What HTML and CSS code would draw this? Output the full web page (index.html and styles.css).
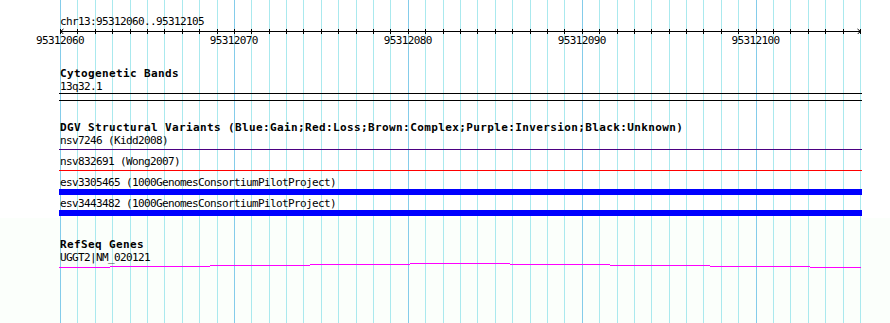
FILE: index.html
```html
<!DOCTYPE html>
<html lang="en">
<head>
  <meta charset="UTF-8" />
  <title>chr13:95312060..95312105</title>
  <link rel="stylesheet" href="styles.css">
</head>
<body>

  <div class="browser">

    <!-- grid, one line per base -->
    <svg class="grid" width="890" height="323" viewBox="0 0 890 323">
      <path class="grid-minor" d="M77.5 0V323M95.5 0V323M112.5 0V323M130.5 0V323M147.5 0V323M164.5 0V323M182.5 0V323M199.5 0V323M217.5 0V323M251.5 0V323M269.5 0V323M286.5 0V323M303.5 0V323M321.5 0V323M338.5 0V323M356.5 0V323M373.5 0V323M390.5 0V323M425.5 0V323M443.5 0V323M460.5 0V323M477.5 0V323M495.5 0V323M512.5 0V323M530.5 0V323M547.5 0V323M564.5 0V323M599.5 0V323M617.5 0V323M634.5 0V323M651.5 0V323M669.5 0V323M686.5 0V323M703.5 0V323M721.5 0V323M738.5 0V323M773.5 0V323M790.5 0V323M808.5 0V323M825.5 0V323M843.5 0V323M860.5 0V323"/>
      <path class="grid-major" d="M60.5 0V323M234.5 0V323M408.5 0V323M582.5 0V323M756.5 0V323"/>
    </svg>

    <!-- Ruler -->
    <div class="ruler">
      <div class="ruler-pos">chr13:95312060..95312105</div>
      <svg class="ruler-axis" width="890" height="6" viewBox="0 0 890 6">
        <path class="axis" d="M60 3.5H861M60.5 3.5L63.5 1M60.5 3.5L63.5 6M860.5 3.5L857.5 1M860.5 3.5L857.5 6"/>
        <path class="axis" d="M60.5 1V6M77.5 1V6M95.5 1V6M112.5 1V6M130.5 1V6M147.5 1V6M164.5 1V6M182.5 1V6M199.5 1V6M217.5 1V6M234.5 1V6M251.5 1V6M269.5 1V6M286.5 1V6M303.5 1V6M321.5 1V6M338.5 1V6M356.5 1V6M373.5 1V6M390.5 1V6M408.5 1V6M425.5 1V6M443.5 1V6M460.5 1V6M477.5 1V6M495.5 1V6M512.5 1V6M530.5 1V6M547.5 1V6M564.5 1V6M582.5 1V6M599.5 1V6M617.5 1V6M634.5 1V6M651.5 1V6M669.5 1V6M686.5 1V6M703.5 1V6M721.5 1V6M738.5 1V6M756.5 1V6M773.5 1V6M790.5 1V6M808.5 1V6M825.5 1V6M843.5 1V6M860.5 1V6"/>
      </svg>
      <div class="ruler-labels">
        <span>95312060</span>
        <span>95312070</span>
        <span>95312080</span>
        <span>95312090</span>
        <span>95312100</span>
      </div>
    </div>

    <!-- Cytogenetic Bands -->
    <div class="track">
      <div class="track-title">Cytogenetic Bands</div>
      <div class="feature-label">13q32.1</div>
      <div class="band"></div>
    </div>

    <!-- DGV -->
    <div class="track">
      <div class="track-title">DGV Structural Variants (Blue:Gain;Red:Loss;Brown:Complex;Purple:Inversion;Black:Unknown)</div>
      <div class="feature-label">nsv7246 (Kidd2008)</div>
      <div class="feature"><div class="sv-line inversion"></div></div>
      <div class="feature-label">nsv832691 (Wong2007)</div>
      <div class="feature"><div class="sv-line loss"></div></div>
      <div class="feature-label">esv3305465 (1000GenomesConsortiumPilotProject)</div>
      <div class="feature"><div class="sv-bar gain"></div></div>
      <div class="feature-label">esv3443482 (1000GenomesConsortiumPilotProject)</div>
      <div class="feature"><div class="sv-bar gain"></div></div>
    </div>

    <!-- RefSeq -->
    <div class="track">
      <div class="track-title">RefSeq Genes</div>
      <div class="feature-label">UGGT2|NM_020121</div>
      <svg class="gene" width="803" height="8" viewBox="59 262 803 8">
        <path d="M59 267.5H110M110 266.5H210M210 265.5H310M310 264.5H410M410 263.5H510M510 264.5H610M610 265.5H710M710 266.5H810M810 267.5H861"/>
      </svg>
    </div>

  </div>

</body>
</html>
```

FILE: styles.css
```css
* {
  margin: 0;
  padding: 0;
  box-sizing: border-box;
}
body {
  background-color: #fff;
  font-family: 'DejaVu Sans Mono', 'Liberation Mono', monospace;
  font-size: 11px;
  letter-spacing: -0.62px;
  color: #000;
}
.browser {
  position: relative;
  width: 890px;
  height: 323px;
  overflow: hidden;
  padding-top: 15px;
  background: linear-gradient(#fff 218px, #fbfffb 218px);
}
.grid {
  position: absolute;
  top: 0;
  left: 0;
  z-index: 0;
}
.grid path {
  fill: none;
  stroke-width: 1;
}
.grid-minor {
  stroke: #aae9ee;
}
.grid-major {
  stroke: #84ccea;
}
.ruler, .track {
  position: relative;
  z-index: 1;
}
.ruler-pos {
  line-height: 13px;
  padding-left: 60px;
}
.ruler-axis {
  display: block;
}
.axis {
  fill: none;
  stroke: #000;
  stroke-width: 1;
}
.ruler-labels {
  display: flex;
  margin-left: -27px;
  line-height: 13px;
}
.ruler-labels span {
  width: 173.913px;
  flex: none;
  text-align: center;
}
.track {
  margin-top: 20px;
  padding-left: 59px;
}
.track-title {
  font-weight: bold;
  letter-spacing: 0.38px;
  line-height: 13px;
  padding-left: 1px;
  white-space: nowrap;
}
.feature-label {
  line-height: 13px;
  padding-left: 1px;
  white-space: nowrap;
}
.band {
  width: 803px;
  height: 8px;
  border-top: 1px solid #000;
  border-bottom: 1px solid #000;
}
.feature {
  display: flow-root;
  width: 803px;
  height: 8px;
}
.sv-line {
  margin-top: 2px;
  height: 1px;
}
.sv-bar {
  height: 6px;
}
.inversion {
  background-color: #4b0082;
}
.loss {
  background-color: #ff0000;
}
.gain {
  background-color: #0000ff;
}
.gene {
  display: block;
  margin-top: -2px;
}
.gene path {
  fill: none;
  stroke: #ff00ff;
  stroke-width: 1;
}
```
